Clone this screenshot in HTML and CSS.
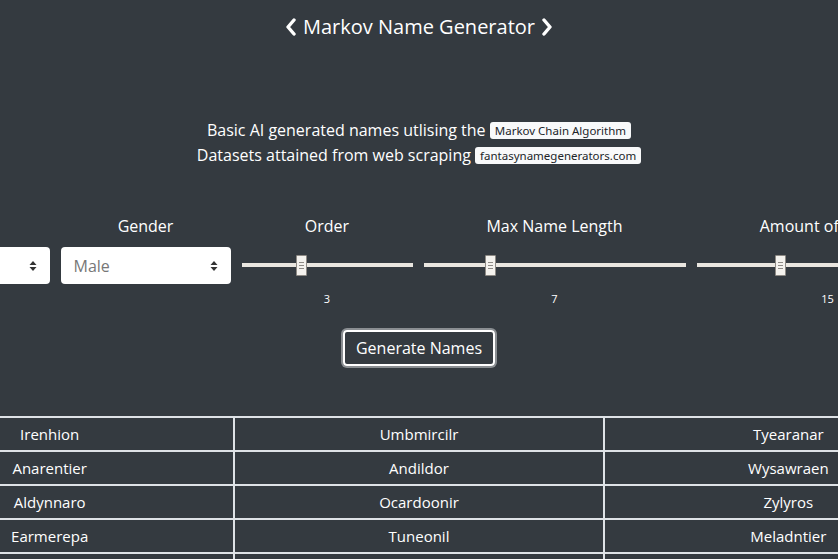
FILE: index.html
```html
<!DOCTYPE html>
<html>
<head>
<meta charset="utf-8">
<link rel="stylesheet" href="styles.css">
</head>
<body>
<div class="page">
  <div class="container">
    <header class="title">
      <svg class="chev" width="12" height="18" viewBox="0 0 12 18"><polyline points="9,2 3,9 9,16" fill="none" stroke="#fff" stroke-width="3.4" stroke-linecap="round" stroke-linejoin="round"/></svg>
      <span>Markov Name Generator</span>
      <svg class="chev" width="12" height="18" viewBox="0 0 12 18"><polyline points="3,2 9,9 3,16" fill="none" stroke="#fff" stroke-width="3.4" stroke-linecap="round" stroke-linejoin="round"/></svg>
    </header>

    <section class="intro">
      <p>Basic AI generated names utlising the <span class="badge">Markov Chain Algorithm</span></p>
      <p>Datasets attained from web scraping <span class="badge">fantasynamegenerators.com</span></p>
    </section>

    <section class="controls">
      <div class="ctl c-sel">
        <div class="lbl">Race</div>
        <div class="select"><span></span><svg class="arrows" width="8" height="12" viewBox="0 0 8 12"><path d="M0.5 5 L4 1 L7.5 5 Z M0.5 7 L4 11 L7.5 7 Z" fill="#333"/></svg></div>
      </div>
      <div class="ctl c-sel">
        <div class="lbl">Gender</div>
        <div class="select"><span>Male</span><svg class="arrows" width="8" height="12" viewBox="0 0 8 12"><path d="M0.5 5 L4 1 L7.5 5 Z M0.5 7 L4 11 L7.5 7 Z" fill="#333"/></svg></div>
      </div>
      <div class="ctl c-order">
        <div class="lbl">Order</div>
        <div class="slider"><div class="track"></div><div class="thumb" style="left: 54px"><i></i><i></i><i></i></div></div>
        <div class="val">3</div>
      </div>
      <div class="ctl c-wide">
        <div class="lbl">Max Name Length</div>
        <div class="slider"><div class="track"></div><div class="thumb" style="left: 61px"><i></i><i></i><i></i></div></div>
        <div class="val">7</div>
      </div>
      <div class="ctl c-wide">
        <div class="lbl">Amount of Names</div>
        <div class="slider"><div class="track"></div><div class="thumb" style="left: 78px"><i></i><i></i><i></i></div></div>
        <div class="val">15</div>
      </div>
    </section>

    <div class="btn-row"><button class="btn">Generate Names</button></div>

    <table class="names">
      <tr><td>Irenhion</td><td>Umbmircilr</td><td>Tyearanar</td></tr>
      <tr><td>Anarentier</td><td>Andildor</td><td>Wysawraen</td></tr>
      <tr><td>Aldynnaro</td><td>Ocardoonir</td><td>Zylyros</td></tr>
      <tr><td>Earmerepa</td><td>Tuneonil</td><td>Meladntier</td></tr>
      <tr><td>Gaelorin</td><td>Ithrandel</td><td>Sylvaren</td></tr>
    </table>
  </div>
</div>
</body>
</html>
```

FILE: styles.css
```css
html, body {
  margin: 0;
  padding: 0;
  background: #343a40;
  overflow: hidden;
}
body {
  font-family: "Open Sans", "Noto Sans", sans-serif;
  color: #fff;
  width: 838px;
  height: 559px;
}
.page {
  display: flex;
  justify-content: center;
  width: 838px;
}
.container {
  flex: 0 0 1110px;
  width: 1110px;
}
.title {
  display: flex;
  justify-content: center;
  align-items: center;
  gap: 6px;
  height: 54px;
  font-size: 20px;
}
.title span { line-height: 1; }
.intro {
  margin-top: 64px;
  text-align: center;
  font-size: 16px;
}
.intro p {
  margin: 0;
  line-height: 25px;
}
.badge {
  display: inline-block;
  background: #f8f9fa;
  color: #212529;
  font-family: "Noto Sans", sans-serif;
  font-size: 11.5px;
  line-height: 17px;
  padding: 0 5px;
  border-radius: 3px;
  vertical-align: 1px;
}
.controls {
  display: flex;
  justify-content: center;
  gap: 11px;
  margin-top: 48px;
}
.ctl {
  display: flex;
  flex-direction: column;
  align-items: stretch;
}
.c-sel { width: 170px; }
.c-order { width: 171px; }
.c-wide { width: 262px; }
.lbl {
  text-align: center;
  font-size: 16px;
  line-height: 20px;
  height: 20px;
  margin-bottom: 11px;
}
.select {
  height: 37px;
  background: #fff;
  border-radius: 4px;
  display: flex;
  align-items: center;
  justify-content: space-between;
  padding: 0 13px;
  color: #777;
  font-size: 16px;
  box-sizing: border-box;
}
.slider {
  position: relative;
  height: 37px;
}
.track {
  position: absolute;
  left: 0;
  right: 0;
  top: 16px;
  height: 4px;
  background: #e9e6e0;
}
.thumb {
  position: absolute;
  top: 8px;
  width: 9px;
  height: 19px;
  background: #f4f2ee;
  border: 1px solid #8e8a85;
  border-radius: 1px;
  display: flex;
  flex-direction: column;
  justify-content: center;
  align-items: center;
  gap: 2px;
}
.thumb i {
  display: block;
  width: 5px;
  height: 1px;
  background: #8e8a85;
}
.val {
  text-align: center;
  font-size: 11px;
  line-height: 14px;
  margin-top: 8px;
}
.btn-row {
  display: flex;
  justify-content: center;
  margin-top: 22px;
}
.btn {
  font-family: inherit;
  font-size: 16px;
  color: #fff;
  background: transparent;
  border: 2px solid #fff;
  border-radius: 4px;
  box-shadow: 0 0 0 2px #8a8e92;
  height: 36px;
  padding: 0 11px;
  margin-top: 2px;
}
.names {
  margin-top: 50px;
  width: 1110px;
  border-collapse: collapse;
  font-size: 15px;
}
.names td {
  border: 2px solid #dee2e6;
  height: 32px;
  padding: 0;
  text-align: center;
  width: 33.33%;
}
```
